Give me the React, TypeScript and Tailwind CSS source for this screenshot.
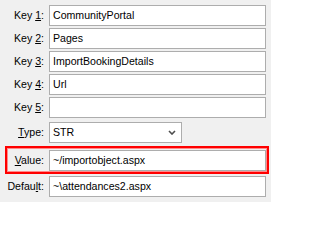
import { ReactNode } from 'react';

const KEYS = [
  { n: '1', value: 'CommunityPortal' },
  { n: '2', value: 'Pages' },
  { n: '3', value: 'ImportBookingDetails' },
  { n: '4', value: 'Url' },
  { n: '5', value: '' },
];

function Field({ value }: { value: string }) {
  return (
    <div className="w-[217px] h-[21px] bg-white border border-[#adadad] flex items-center pl-[3px] leading-none">
      {value}
    </div>
  );
}

function Label({ children, w = 'w-[49px]' }: { children: ReactNode; w?: string }) {
  return <div className={`${w} shrink-0 text-right pr-[5px] leading-none`}>{children}</div>;
}

export default function App() {
  return (
    <div
      className="w-[271px] h-[202px] bg-[#f0f0f0] text-black text-[10.6px] pt-[5px] flex flex-col"
      style={{ fontFamily: '"Liberation Sans", Arial, sans-serif' }}
    >
      <div className="flex flex-col gap-[2px]">
        {KEYS.map((k) => (
          <div key={k.n} className="flex items-center">
            <Label>
              Key <span className="underline">{k.n}</span>:
            </Label>
            <Field value={k.value} />
          </div>
        ))}
      </div>

      <div className="flex items-center mt-[4px]">
        <Label>
          <span className="underline">T</span>ype:
        </Label>
        <div className="w-[133px] h-[21px] bg-white border border-[#adadad] flex items-center justify-between pl-[3px] pr-[5px] leading-none">
          STR
          <svg width="8" height="5" viewBox="0 0 8 5" fill="none">
            <path d="M1 1l3 3 3-3" stroke="#4d4d4d" strokeWidth="1.6" />
          </svg>
        </div>
      </div>

      <div className="ml-[5px] mt-[3px] w-[264px] border-2 border-[#ff0000] shadow-[inset_0_0_0_1px_#ff8a8a] pt-[2px] pb-[1px] flex items-center">
        <Label w="w-[42px]">
          <span className="underline">V</span>alue:
        </Label>
        <Field value="~/importobject.aspx" />
      </div>

      <div className="flex items-center mt-[2px]">
        <Label>
          Defau<span className="underline">l</span>t:
        </Label>
        <Field value="~\attendances2.aspx" />
      </div>
    </div>
  );
}
